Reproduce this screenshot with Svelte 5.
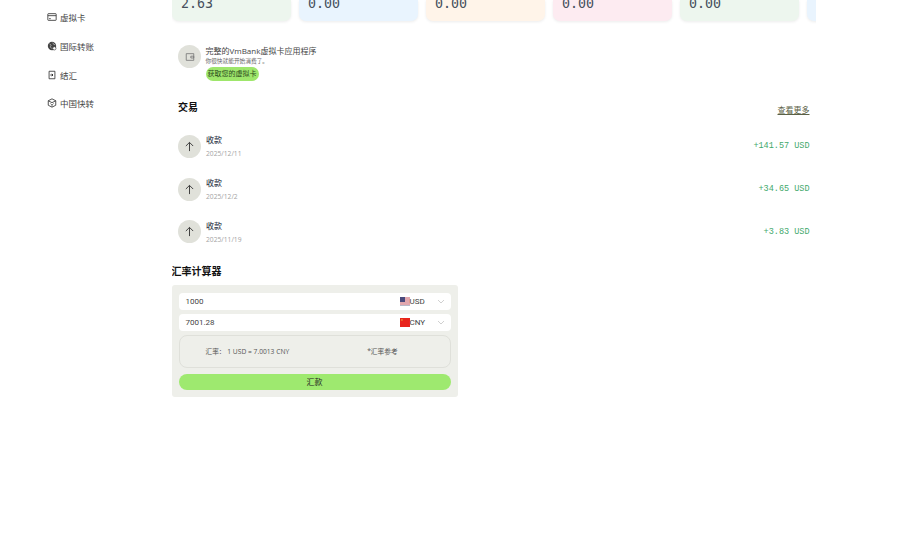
<script lang="ts">
	const navItems = [
		{ name: "虚拟卡", icon: "card" },
		{ name: "国际转账", icon: "globe" },
		{ name: "结汇", icon: "exchange" },
		{ name: "中国快转", icon: "box" }
	];

	const balances = [
		{ value: "2.63", tone: "green" },
		{ value: "0.00", tone: "blue" },
		{ value: "0.00", tone: "orange" },
		{ value: "0.00", tone: "pink" },
		{ value: "0.00", tone: "green" },
		{ value: "", tone: "blue" }
	];

	const transactions = [
		{ title: "收款", date: "2025/12/11", amount: "+141.57 USD" },
		{ title: "收款", date: "2025/12/2", amount: "+34.65 USD" },
		{ title: "收款", date: "2025/11/19", amount: "+3.83 USD" }
	];
</script>

<div class="page">
	<aside class="sidebar">
		{#each navItems as item}
			<div class="nav-item">
				<svg class="nav-icon" viewBox="0 0 12 12" fill="none" stroke="#333" stroke-width="1">
					{#if item.icon === "card"}
						<rect x="1" y="2" width="10" height="8" rx="0.6" />
						<path d="M1 4.400h10M2.500 8h2" />
					{:else if item.icon === "globe"}
						<circle cx="6" cy="6" r="5" fill="#444" stroke="none" />
						<path d="M3 3.500l2 1.500-1 2 1.500 2M7 2l1 2 2 .5" stroke="#ccc" stroke-width="0.8" />
						<circle cx="8.800" cy="8.800" r="2" fill="#fff" stroke="#444" stroke-width="0.8" />
					{:else if item.icon === "exchange"}
						<path d="M2.500 1.500h7v9h-7z" />
						<path d="M4 6h3M5.800 4.600l1.400 1.400-1.400 1.400" stroke-width="1.200" />
					{:else}
						<path d="M6 1l4.500 2.300v5.400L6 11 1.500 8.700V3.300z" />
						<path d="M1.500 3.300L6 5.600l4.500-2.300" />
						<path d="M4 6.500l2 2 2-2M6 8.500v2" stroke-width="0.8" />
					{/if}
				</svg>
				<span>{item.name}</span>
			</div>
		{/each}
	</aside>

	<main class="main">
		<div class="cards">
			{#each balances as card}
				<div class="card {card.tone}">
					<span class="card-value">{card.value}</span>
				</div>
			{/each}
		</div>

		<div class="promo">
			<div class="promo-icon">
				<svg viewBox="0 0 12 12" width="10" height="10" fill="none" stroke="#777" stroke-width="1">
					<path d="M1.500 2h9v8h-9z" />
					<path d="M7 5h3.500v2.200H7z" />
				</svg>
			</div>
			<div class="promo-text">
				<div class="promo-title">完整的VmBank虚拟卡应用程序</div>
				<div class="promo-sub">你很快就能开始消费了。</div>
				<div class="promo-btn">获取您的虚拟卡</div>
			</div>
		</div>

		<section class="transactions">
			<div class="section-head">
				<h2>交易</h2>
				<span class="more">查看更多</span>
			</div>
			{#each transactions as tx}
				<div class="tx">
					<div class="tx-icon">
						<svg viewBox="0 0 12 12" width="11" height="11" fill="none" stroke="#333" stroke-width="1">
							<path d="M6 11V1.500M2 5.500l4-4 4 4" />
						</svg>
					</div>
					<div class="tx-info">
						<div class="tx-title">{tx.title}</div>
						<div class="tx-date">{tx.date}</div>
					</div>
					<div class="tx-amount">{tx.amount}</div>
				</div>
			{/each}
		</section>

		<section class="calc">
			<h2>汇率计算器</h2>
			<div class="calc-box">
				<div class="field">
					<span>1000</span>
					<div class="currency">
						<svg class="flag" viewBox="0 0 10 9">
							<rect width="10" height="9" fill="#f0e6e8" />
							<path d="M0 1h10M0 3h10M0 5h10M0 7h10" stroke="#cf5a68" stroke-width="0.9" />
							<path d="M0 8.500h10" stroke="#b9b9c8" stroke-width="1" />
							<rect width="5" height="5" fill="#4a4a7c" />
						</svg>
						<span>USD</span>
					</div>
					<svg class="chevron" viewBox="0 0 8 5" fill="none" stroke="#c4c4c4" stroke-width="0.8"><path d="M1 1l3 3 3-3" /></svg>
				</div>
				<div class="field">
					<span>7001.28</span>
					<div class="currency">
						<svg class="flag" viewBox="0 0 10 9">
							<rect width="10" height="9" fill="#e8241c" />
							<rect x="1" y="1" width="1.800" height="1.800" fill="#e8742c" />
						</svg>
						<span>CNY</span>
					</div>
					<svg class="chevron" viewBox="0 0 8 5" fill="none" stroke="#c4c4c4" stroke-width="0.8"><path d="M1 1l3 3 3-3" /></svg>
				</div>
				<div class="rate">
					<span>汇率： 1 USD = 7.0013 CNY</span>
					<span class="rate-note">*汇率参考</span>
				</div>
				<div class="send">汇款</div>
			</div>
		</section>
	</main>
</div>

<style>
	:global(body) {
		background: #fff;
		font-family: "Open Sans", "Noto Sans CJK SC", sans-serif;
	}

	.page {
		display: flex;
		width: 910px;
		height: 560px;
		overflow: hidden;
		color: #333;
	}

	.sidebar {
		width: 171.500px;
		flex-shrink: 0;
		padding: 3px 0 0 47px;
		box-sizing: border-box;
	}

	.nav-item {
		display: flex;
		align-items: center;
		gap: 3px;
		height: 28.700px;
		font-size: 8.500px;
		color: #444;
	}

	.nav-icon {
		width: 10px;
		height: 10px;
	}

	.main {
		width: 644.500px;
		flex-shrink: 0;
		overflow: hidden;
	}

	.cards {
		display: flex;
		gap: 8px;
		height: 22px;
		margin-bottom: 22px;
	}

	.card {
		width: 119px;
		height: 21px;
		flex-shrink: 0;
		border-radius: 0 0 7px 7px;
		box-shadow: 0 1px 3px rgba(0, 0, 0, 0.08);
		padding-left: 9.500px;
		box-sizing: border-box;
		overflow: hidden;
	}

	.green { background: #edf6ee; }
	.blue { background: #e9f4fe; }
	.orange { background: #fff4e9; }
	.pink { background: #fdebf1; }

	.card-value {
		display: block;
		margin-top: -6px;
		font: 13.300px/20px "DejaVu Sans Mono", monospace;
		color: #46505c;
	}

	.promo {
		display: flex;
		align-items: flex-start;
		gap: 4.500px;
		padding: 1px 0 0 6.500px;
		height: 37px;
	}

	.promo-icon {
		width: 23px;
		height: 23px;
		border-radius: 50%;
		background: #e0e1da;
		display: flex;
		align-items: center;
		justify-content: center;
	}

	.promo-title {
		font-size: 8px;
		line-height: 12px;
		color: #444;
	}

	.promo-sub {
		font-size: 5.700px;
		line-height: 8px;
		color: #666;
	}

	.promo-btn {
		width: fit-content;
		margin-top: 2px;
		padding: 0 2px;
		height: 14px;
		line-height: 14px;
		font-size: 7px;
		color: #2b4a1c;
		background: #9ee66b;
		border-radius: 7px;
	}

	.transactions {
		padding: 0 6.500px;
		margin-top: 17px;
	}

	.section-head {
		display: flex;
		justify-content: space-between;
		align-items: flex-end;
		height: 17px;
		margin-bottom: 9px;
	}

	h2 {
		margin: 0;
		font-size: 10px;
		font-weight: 700;
		color: #111;
	}

	.section-head h2 {
		align-self: flex-start;
		line-height: 16px;
	}

	.more {
		font-size: 8px;
		color: #5b6146;
		text-decoration: underline;
		line-height: 12px;
	}

	.tx {
		display: flex;
		align-items: center;
		gap: 5px;
		height: 42.700px;
	}

	.tx-icon {
		width: 23px;
		height: 23px;
		border-radius: 50%;
		background: #e0e1da;
		display: flex;
		align-items: center;
		justify-content: center;
	}

	.tx-info {
		flex: 1;
		padding-top: 2px;
	}

	.tx-title {
		font-size: 8px;
		line-height: 13px;
		font-weight: 500;
		color: #3c4654;
	}

	.tx-date {
		margin-top: 1px;
		font-size: 6.700px;
		line-height: 14px;
		color: #a3a3a3;
	}

	.tx-amount {
		font: 8.500px "Liberation Mono", monospace;
		color: #3fa86c;
	}

	.calc {
		margin-top: 11px;
		width: 286px;
	}

	.calc h2 {
		line-height: 14px;
		margin-bottom: 7px;
	}

	.calc-box {
		background: #eeefea;
		border-radius: 3px;
		padding: 8px 7px 7px 7px;
		display: flex;
		flex-direction: column;
		gap: 4px;
	}

	.field {
		display: flex;
		align-items: center;
		height: 17px;
		padding: 0 6px 0 7px;
		background: #fff;
		border-radius: 4px;
		font-family: Roboto, sans-serif;
		font-size: 8px;
		color: #444;
	}

	.field > span {
		flex: 1;
	}

	.currency {
		display: flex;
		align-items: center;
		width: 37px;
	}

	.flag {
		width: 10px;
		height: 9px;
	}

	.chevron {
		width: 8px;
		height: 5px;
	}

	.rate {
		display: flex;
		align-items: center;
		height: 33px;
		box-sizing: border-box;
		padding: 0 0 2px 26px;
		border: 1px solid #dfe0da;
		border-radius: 8px;
		font-size: 6.700px;
		color: #555;
	}

	.rate-note {
		margin-left: 78px;
	}

	.send {
		height: 16px;
		margin-top: 2px;
		line-height: 16px;
		text-align: center;
		background: #9ee96f;
		border-radius: 8px;
		font-size: 8px;
		color: #222;
	}
</style>
